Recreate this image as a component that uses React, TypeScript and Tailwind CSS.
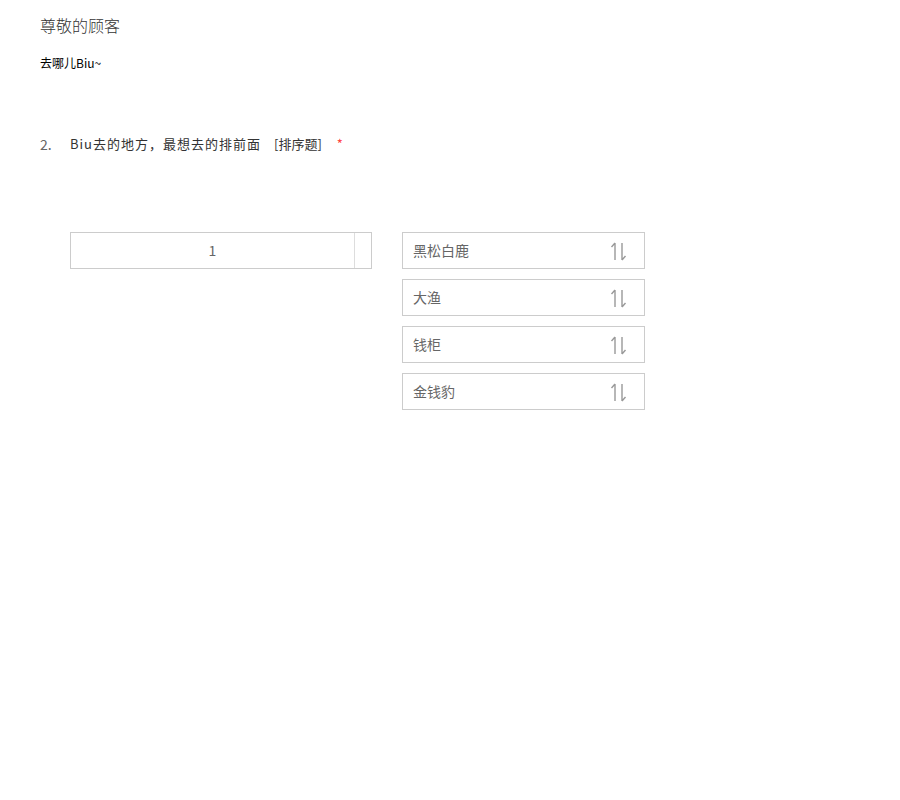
import React from "react";

const options = ["黑松白鹿", "大渔", "钱柜", "金钱豹"];

function SortIcon() {
  return (
    <svg width="18" height="20" viewBox="0 0 18 20" fill="none" stroke="#999" strokeWidth="1.4">
      <path d="M6 2v17M6 2L2.5 6" />
      <path d="M13 2v17M13 19l3.5-4" />
    </svg>
  );
}

export default function App() {
  return (
    <div
      className="min-h-[800px] w-[900px] bg-white"
      style={{ fontFamily: '"Microsoft YaHei", "Noto Sans CJK SC", "Liberation Sans", sans-serif' }}
    >
      <div className="px-10 pt-[15px]">
        <h1 className="text-[16px] font-light leading-[20px] text-[#333]">尊敬的顾客</h1>
        <p className="mt-[20px] text-[12px] leading-[16px] text-black">去哪儿Biu~</p>

        <div className="mt-[64px] flex items-center text-[13px] leading-[18px] text-[#333]">
          <span className="w-[30px] text-[14px] text-[#666]">2.</span>
          <span className="tracking-[1px]">Biu去的地方，最想去的排前面</span>
          <span className="ml-[13px]">[排序题]</span>
          <span className="ml-[15px] text-[#f44]">*</span>
        </div>

        <div className="mt-[79px] ml-[30px] flex gap-[30px]">
          <div className="flex h-[37px] w-[302px] border border-[#ccc]">
            <div className="flex flex-1 items-center justify-center text-[14px] text-[#666]">1</div>
            <div className="w-[17px] border-l border-[#ddd]" />
          </div>
          <div className="flex flex-col gap-[10px]">
            {options.map((o) => (
              <div
                key={o}
                className="flex h-[37px] w-[243px] items-center justify-between border border-[#ccc] pl-[10px] pr-[17px] text-[14px] text-[#666]"
              >
                <span>{o}</span>
                <SortIcon />
              </div>
            ))}
          </div>
        </div>
      </div>
    </div>
  );
}
